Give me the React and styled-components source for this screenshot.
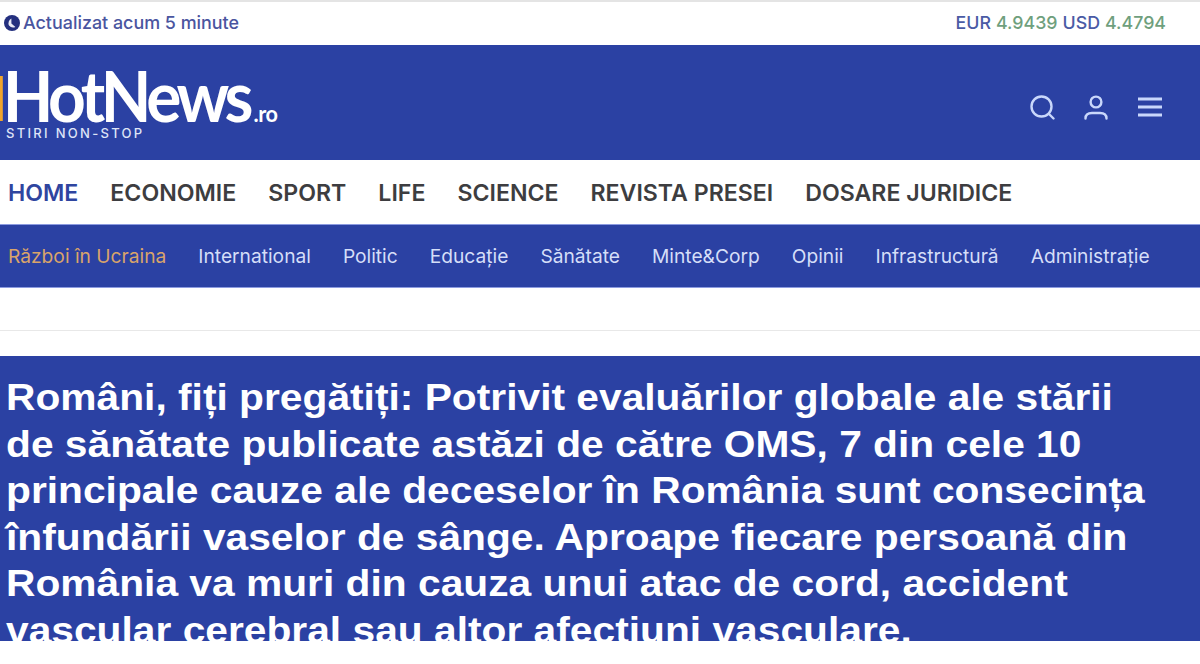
import React from 'react';
import styled, { createGlobalStyle } from 'styled-components';

const GlobalStyle = createGlobalStyle`
body {
  margin: 0;
  background-color: #fff;
  font-family: Inter, "Liberation Sans", sans-serif;
}
`;

const Page = styled.div`
display: flex;
flex-direction: column;
height: 664px;
overflow: hidden;
background-color: #fff;
`;

const TopBar = styled.div`
display: flex;
align-items: center;
justify-content: space-between;
height: 45px;
padding: 0 34px 2px 4px;
box-sizing: border-box;
border-top: 2px solid #e4e4e4;
`;

const Updated = styled.div`
display: flex;
align-items: center;
gap: 3px;
font-size: 17.9px;
font-weight: 500;
color: #4a559f;
`;

const Rates = styled.div`
display: flex;
gap: 5px;
font-size: 17.8px;
font-weight: 500;
`;

const Currency = styled.span`
color: #4a5ba5;
`;

const RateValue = styled.span`
color: #6f9f7d;
`;

const Header = styled.div`
display: flex;
justify-content: space-between;
height: 115px;
padding: 31px 37px 0 0;
box-sizing: border-box;
background-color: #2b41a3;
`;

const Logo = styled.div`
display: flex;
flex-direction: column;
color: #fff;
`;

const LogoMark = styled.div`
display: flex;
align-items: baseline;
height: 45px;
border-left: 3px solid #f0a52c;
font-family: Lato, sans-serif;
font-size: 70px;
line-height: 39px;
letter-spacing: -4.7px;
font-weight: 700;
transform: scaleX(0.94);
transform-origin: left top;
`;

const LogoTld = styled.span`
font-size: 23px;
letter-spacing: -0.5px;
font-weight: 700;
margin-left: 5px;
`;

const LogoTagline = styled.div`
font-family: Inter, sans-serif;
font-size: 13px;
line-height: 14px;
font-weight: 500;
letter-spacing: 2.3px;
margin-top: 5px;
padding-left: 6px;
color: #dfe4f7;
white-space: nowrap;
`;

const HeaderIcons = styled.div`
display: flex;
align-items: center;
gap: 28px;
height: 62px;
color: #c9d7fb;
`;

const MainNav = styled.nav`
display: flex;
align-items: center;
gap: 32px;
height: 64px;
padding: 1px 0 0 8px;
box-sizing: border-box;
`;

const MainLink = styled.a`
font-size: 23.13px;
font-weight: 600;
color: ${(props) => (props.active ? '#2f459f' : '#3d3d40')};
`;

const SubNav = styled.nav`
display: flex;
align-items: center;
gap: 32px;
height: 64px;
padding-left: 8px;
background-color: #2b41a3;
border-top: 1px solid #8c9be0;
border-bottom: 1px solid #8c9be0;
box-sizing: border-box;
white-space: nowrap;
`;

const SubLink = styled.a`
font-size: 19.2px;
color: ${(props) => (props.hot ? '#d9a46a' : '#d5def8')};
`;

const Divider = styled.div`
height: 42px;
border-bottom: 1px solid #e8e8e8;
`;

const Banner = styled.div`
margin-top: 25px;
height: 285px;
overflow: hidden;
padding: 19px 6px 0;
box-sizing: border-box;
background-color: #2b41a3;
`;

const BannerText = styled.div`
font-family: "Liberation Sans", Arial, sans-serif;
font-size: 37px;
line-height: 46.5px;
font-weight: 700;
color: #fff;
white-space: nowrap;
transform: scaleX(1.101);
transform-origin: left top;
`;

const stroke = { fill: 'none', stroke: 'currentColor', strokeWidth: 2.4, strokeLinecap: 'round' };

function ClockIcon() {
  return (
    <svg width="16" height="16" viewBox="0 0 16 16">
      <circle cx="8" cy="8" r="8" fill="#24307f" />
      <path d="M7.4 3.4V8.6L11.4 12A5.4 5.4 0 0 1 5 10.5 5.4 5.4 0 0 1 7.4 3.4Z" fill="#e8eaf6" />
    </svg>
  );
}

function SearchIcon() {
  return (
    <svg width="26" height="26" viewBox="0 0 26 26" {...stroke}>
      <circle cx="12.5" cy="12.5" r="10" />
      <path d="M20 20L24.5 24.5" />
    </svg>
  );
}

function UserIcon() {
  return (
    <svg width="26" height="26" viewBox="0 0 26 26" {...stroke}>
      <circle cx="13" cy="8" r="5.4" />
      <path d="M2.5 24.5C2.5 20.5 5.5 19 9 19H17C20.5 19 23.5 20.5 23.5 24.5" />
    </svg>
  );
}

function MenuIcon() {
  return (
    <svg width="26" height="22" viewBox="0 0 26 22" fill="none" stroke="currentColor" strokeWidth="2.8">
      <path d="M1 3H25M1 11H25M1 19H25" />
    </svg>
  );
}

const mainLinks = ['ECONOMIE', 'SPORT', 'LIFE', 'SCIENCE', 'REVISTA PRESEI', 'DOSARE JURIDICE'];
const subLinks = ['International', 'Politic', 'Educație', 'Sănătate', 'Minte&Corp', 'Opinii', 'Infrastructură', 'Administrație'];

function App() {
  return (
    <Page>
      <GlobalStyle />
      <TopBar>
        <Updated>
          <ClockIcon />
          Actualizat acum 5 minute
        </Updated>
        <Rates>
          <Currency>EUR</Currency>
          <RateValue>4.9439</RateValue>
          <Currency>USD</Currency>
          <RateValue>4.4794</RateValue>
        </Rates>
      </TopBar>
      <Header>
        <Logo>
          <LogoMark>
            HotNews
            <LogoTld>.ro</LogoTld>
          </LogoMark>
          <LogoTagline>STIRI NON-STOP</LogoTagline>
        </Logo>
        <HeaderIcons>
          <SearchIcon />
          <UserIcon />
          <MenuIcon />
        </HeaderIcons>
      </Header>
      <MainNav>
        <MainLink active>HOME</MainLink>
        {mainLinks.map((link) => <MainLink key={link}>{link}</MainLink>)}
      </MainNav>
      <SubNav>
        <SubLink hot>Război în Ucraina</SubLink>
        {subLinks.map((link) => <SubLink key={link}>{link}</SubLink>)}
      </SubNav>
      <Divider />
      <Banner>
        <BannerText>
          Români, fiți pregătiți: Potrivit evaluărilor globale ale stării<br />
          de sănătate publicate astăzi de către OMS, 7 din cele 10<br />
          principale cauze ale deceselor în România sunt consecința<br />
          înfundării vaselor de sânge. Aproape fiecare persoană din<br />
          România va muri din cauza unui atac de cord, accident<br />
          vascular cerebral sau altor afecțiuni vasculare.
        </BannerText>
      </Banner>
    </Page>
  );
}

export default App;
